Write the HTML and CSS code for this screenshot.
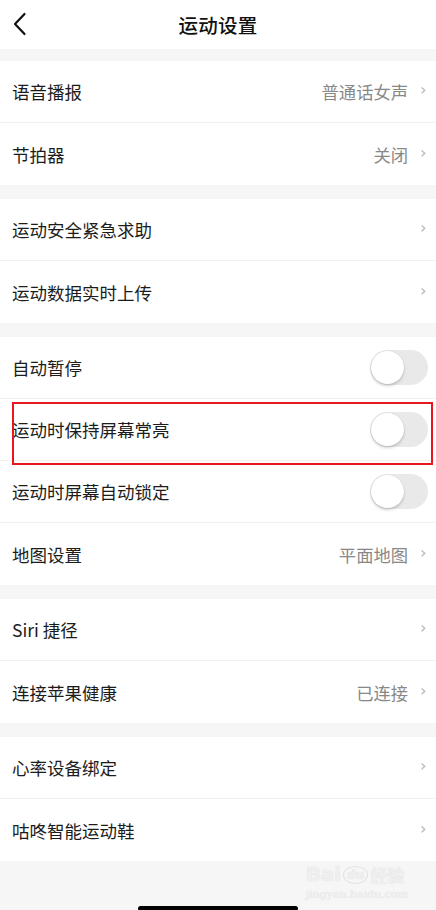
FILE: index.html
```html
<!DOCTYPE html>
<html lang="zh-CN">
<head>
<meta charset="utf-8">
<title>运动设置</title>
<link rel="stylesheet" href="styles.css">
</head>
<body>
<div class="page">
  <header class="nav">
    <svg class="back" width="16" height="24" viewBox="0 0 16 24"><polyline points="12.5,2 3,12 12.5,22" fill="none" stroke="#111" stroke-width="2.2" stroke-linecap="round" stroke-linejoin="round"/></svg>
    <h1 class="title">运动设置</h1>
  </header>

  <section class="group">
    <div class="row"><span class="label">语音播报</span><span class="value">普通话女声</span><span class="chev">›</span></div>
    <div class="row"><span class="label">节拍器</span><span class="value">关闭</span><span class="chev">›</span></div>
  </section>

  <section class="group">
    <div class="row"><span class="label">运动安全紧急求助</span><span class="chev">›</span></div>
    <div class="row"><span class="label">运动数据实时上传</span><span class="chev">›</span></div>
  </section>

  <section class="group">
    <div class="row"><span class="label">自动暂停</span><span class="switch"><span class="knob"></span></span></div>
    <div class="row highlight"><span class="label">运动时保持屏幕常亮</span><span class="switch"><span class="knob"></span></span></div>
    <div class="row"><span class="label">运动时屏幕自动锁定</span><span class="switch"><span class="knob"></span></span></div>
    <div class="row"><span class="label">地图设置</span><span class="value">平面地图</span><span class="chev">›</span></div>
  </section>

  <section class="group">
    <div class="row"><span class="label">Siri 捷径</span><span class="chev">›</span></div>
    <div class="row"><span class="label">连接苹果健康</span><span class="value">已连接</span><span class="chev">›</span></div>
  </section>

  <section class="group">
    <div class="row"><span class="label">心率设备绑定</span><span class="chev">›</span></div>
    <div class="row"><span class="label">咕咚智能运动鞋</span><span class="chev">›</span></div>
  </section>

  <footer class="foot">
    <div class="mark">
      <div class="mark-top"><span class="bai">Bai</span><span class="du">du</span><span class="jy">经验</span></div>
      <div class="mark-url">jingyan.baidu.com</div>
    </div>
    <div class="homebar"></div>
  </footer>
</div>
</body>
</html>
```

FILE: styles.css
```css
* { box-sizing: border-box; margin: 0; padding: 0; }
html, body { background: #f6f6f6; }
body {
  width: 436px;
  height: 910px;
  overflow: hidden;
  font-family: "Noto Sans CJK SC", "Noto Sans", sans-serif;
  color: #1c1c1c;
}
.page { display: flex; flex-direction: column; height: 910px; }

.nav {
  height: 49px;
  background: #fff;
  display: flex;
  align-items: center;
  justify-content: center;
  position: relative;
  margin-bottom: 12px;
}
.back { position: absolute; left: 12px; top: 12px; }
.title { font-size: 19.5px; font-weight: 500; color: #111; letter-spacing: 0.3px; }

.group { background: #fff; margin-bottom: 14px; }
.row {
  height: 62px;
  display: flex;
  align-items: center;
  padding: 0 8px 0 12px;
  border-bottom: 1px solid #f1f1f1;
  position: relative;
}
.row:last-child { border-bottom: none; }
.label { flex: 1; font-size: 17.5px; color: #1c1c1c; }
.value { font-size: 17.3px; color: #888; margin-right: 12px; }
.chev {
  font-family: "DejaVu Sans", sans-serif;
  font-size: 16px;
  color: #b4b4b4;
  width: 6px;
  margin-right: 2px;
  line-height: 1;
  margin-top: -3px;
}

.switch {
  width: 58px;
  height: 35px;
  border-radius: 18px;
  background: #e9e9e9;
  display: flex;
  align-items: center;
  padding: 1px;
}
.knob {
  width: 33px;
  height: 33px;
  border-radius: 50%;
  background: #fff;
  box-shadow: 0 2px 3px rgba(0,0,0,0.18), 0 0 0 0.5px rgba(0,0,0,0.06);
}

.highlight::after {
  content: "";
  position: absolute;
  z-index: 1;
  left: 12px;
  right: 3px;
  top: 3px;
  bottom: -5px;
  border: 2px solid #e8161f;
}

.foot {
  flex: 1;
  display: flex;
  flex-direction: column;
  align-items: center;
  justify-content: flex-end;
  position: relative;
  margin-top: -14px;
}
.mark {
  position: absolute;
  right: 28px;
  top: 1px;
  text-align: center;
  color: #efefef;
  text-shadow: 0 0 1px #d8d8d8;
  font-family: "DejaVu Serif", serif;
}
.mark-top { display: flex; align-items: center; gap: 2px; height: 25px; line-height: 25px; font-size: 20px; font-weight: bold; font-family: "DejaVu Sans", sans-serif; }
.du { font-size: 12px; line-height: 16px; border: 1.5px solid #e2e2e2; border-radius: 50%; padding: 0 3px; }
.jy { font-family: "Noto Sans CJK SC", sans-serif; font-size: 17px; line-height: 25px; }
.mark-url { font-size: 11px; line-height: 13px; margin-top: 1px; }
.homebar {
  width: 160px;
  height: 5px;
  background: #000;
  border-radius: 3px;
  margin-bottom: -1px;
}
```
